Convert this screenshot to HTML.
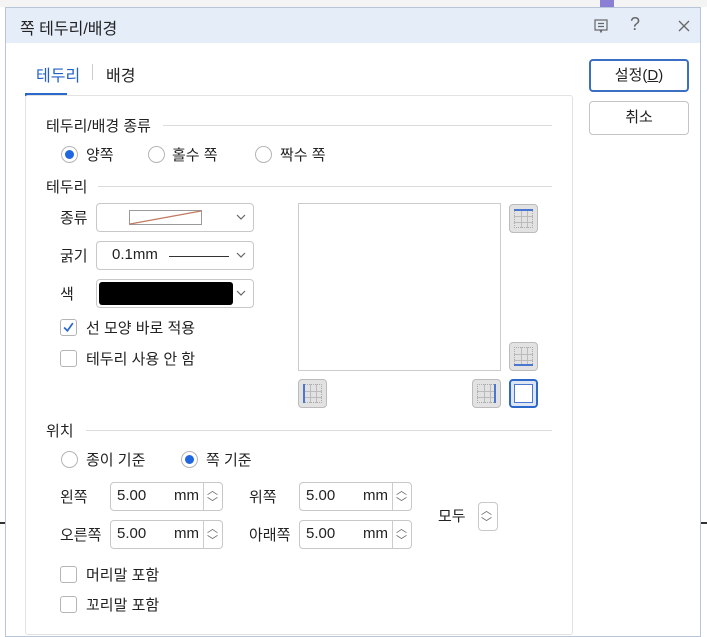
<!DOCTYPE html>
<html><head><meta charset="utf-8"><style>
*{box-sizing:border-box}
body{margin:0;width:707px;height:630px;overflow:hidden;background:#fff;font-family:"Liberation Sans","Noto Sans CJK KR",sans-serif;font-size:15px;color:#222;position:relative}
.a{position:absolute}
.dlg{left:5px;top:7px;width:696px;height:630px;background:#fff;border:1px solid #b8c4d8}
.title{left:0;top:0;width:100%;height:35px;background:#e5edf9}
.hr{height:1px;background:#dcdcdc}
.btn{border:1px solid #c4c4c4;border-radius:4px;background:#fff;text-align:center;line-height:31px}
.cb{width:17px;height:17px;border:1px solid #b5b5b5;border-radius:3px;background:#fff}
.rd{width:17px;height:17px;border:1px solid #b5b5b5;border-radius:50%;background:#fff}
.rd.on::after{content:"";position:absolute;left:3px;top:3px;width:9px;height:9px;border-radius:50%;background:#1f66e0}
.sel{border:1px solid #c8c8c8;border-radius:4px;background:#fff;height:29px}
.chev{position:absolute;right:6px;top:7px;width:12px;height:12px}
.spin{border:1px solid #c8c8c8;border-radius:4px;background:#fff;height:29px}
.ib{width:29px;height:29px;border:1px solid #bbb;border-radius:4px;background:#e2e2e2;background-image:linear-gradient(#e2e2e2,#e2e2e2)}
.grid{position:absolute;left:4px;top:4px;width:19px;height:19px;border:1px dotted #aaa;background:
linear-gradient(to right,transparent 6px,#bbb 6px,#bbb 7px,transparent 7px,transparent 12px,#bbb 12px,#bbb 13px,transparent 13px),
linear-gradient(to bottom,transparent 6px,#bbb 6px,#bbb 7px,transparent 7px,transparent 12px,#bbb 12px,#bbb 13px,transparent 13px)}
</style></head><body>
<div class="a" style="left:0;top:0;width:707px;height:7px;background:#f4f4f4"></div>
<div class="a" style="left:0;top:522px;width:707px;height:2px;background:#333"></div>
<div class="a" style="left:600px;top:0;width:14px;height:7px;background:#8a7fd4"></div>
<div class="a dlg">
 <div class="a title"></div>
 <div class="a" style="left:14px;top:7px;font-size:16px">쪽 테두리/배경</div>
 <svg class="a" style="left:587px;top:10px" width="16" height="16" viewBox="0 0 16 16" fill="none" stroke="#666" stroke-width="1.2"><rect x="2" y="2" width="12" height="10"/><path d="M5 5.5h6M5 8.5h6M7 12l1 2 1-2"/></svg>
 <div class="a" style="left:624px;top:6px;font-size:18px;color:#666">?</div>
 <svg class="a" style="left:671px;top:11px" width="14" height="14" viewBox="0 0 14 14" stroke="#666" stroke-width="1.3"><path d="M2 2l10 10M12 2L2 12"/></svg>
</div>
<div class="a" style="left:36px;top:62px;color:#2261c7;font-size:16px">테두리</div>
<div class="a" style="left:92px;top:64px;width:1px;height:16px;background:#ccc"></div>
<div class="a" style="left:106px;top:62px;font-size:16px">배경</div>
<div class="a" style="left:25px;top:93px;width:42px;height:3px;background:#2c68c9"></div>
<div class="a" style="left:25px;top:95px;width:548px;height:540px;border:1px solid #e2e2e2;border-radius:3px"></div>
<div class="a btn" style="left:589px;top:59px;width:100px;height:33px;border:2px solid #3b6fc3;line-height:29px">설정(<u>D</u>)</div>
<div class="a btn" style="left:589px;top:101px;width:100px;height:34px">취소</div>
<div class="a" style="left:46px;top:115px">테두리/배경 종류</div>
<div class="a hr" style="left:163px;top:125px;width:389px"></div>
<div class="a rd on" style="left:61px;top:146px"></div><div class="a" style="left:86px;top:144px">양쪽</div>
<div class="a rd" style="left:148px;top:146px"></div><div class="a" style="left:172px;top:144px">홀수 쪽</div>
<div class="a rd" style="left:255px;top:146px"></div><div class="a" style="left:280px;top:144px">짝수 쪽</div>
<div class="a" style="left:46px;top:176px">테두리</div>
<div class="a hr" style="left:98px;top:186px;width:454px"></div>
<div class="a" style="left:60px;top:207px">종류</div>
<div class="a sel" style="left:96px;top:203px;width:158px"><svg class="a" style="left:32px;top:6px" width="73" height="15"><rect x="0.5" y="0.5" width="72" height="14" fill="#fff" stroke="#999"/><path d="M1 14L72 1" stroke="#c07a60" stroke-width="1.2"/></svg><svg class="chev" viewBox="0 0 12 12"><path d="M2 4l4 4 4-4" fill="none" stroke="#666" stroke-width="1.2"/></svg></div>
<div class="a" style="left:60px;top:245px">굵기</div>
<div class="a sel" style="left:96px;top:241px;width:158px"><div class="a" style="left:15px;top:4px">0.1mm</div><div class="a" style="left:72px;top:14px;width:60px;height:1px;background:#333"></div><svg class="chev" viewBox="0 0 12 12"><path d="M2 4l4 4 4-4" fill="none" stroke="#666" stroke-width="1.2"/></svg></div>
<div class="a" style="left:60px;top:283px">색</div>
<div class="a sel" style="left:96px;top:279px;width:158px"><div class="a" style="left:2px;top:2px;width:134px;height:23px;background:#000;border-radius:3px"></div><svg class="chev" viewBox="0 0 12 12"><path d="M2 4l4 4 4-4" fill="none" stroke="#666" stroke-width="1.2"/></svg></div>
<div class="a cb" style="left:60px;top:319px"><svg style="position:absolute;left:1px;top:1px" width="13" height="13" viewBox="0 0 12 12"><path d="M2 6l3 3 5-7" fill="none" stroke="#2c68c9" stroke-width="1.6"/></svg></div>
<div class="a" style="left:86px;top:317px">선 모양 바로 적용</div>
<div class="a cb" style="left:60px;top:350px"></div><div class="a" style="left:86px;top:348px">테두리 사용 안 함</div>
<div class="a" style="left:298px;top:203px;width:203px;height:168px;border:1px solid #ccc"></div>
<div class="a ib" style="left:509px;top:204px"><div class="grid"></div><div class="a" style="left:4px;top:4px;width:19px;height:2px;background:#4a78d0"></div></div>
<div class="a ib" style="left:509px;top:342px"><div class="grid"></div><div class="a" style="left:4px;top:21px;width:19px;height:2px;background:#4a78d0"></div></div>
<div class="a ib" style="left:298px;top:379px"><div class="grid"></div><div class="a" style="left:4px;top:4px;width:2px;height:19px;background:#4a78d0"></div></div>
<div class="a ib" style="left:472px;top:379px"><div class="grid"></div><div class="a" style="left:21px;top:4px;width:2px;height:19px;background:#4a78d0"></div></div>
<div class="a ib" style="left:509px;top:379px;border:2px solid #2c68c9;background:#dfe6f3"><div class="a" style="left:3px;top:3px;width:19px;height:19px;border:1px solid #4a78d0;background:#fff"></div></div>
<div class="a" style="left:46px;top:420px">위치</div>
<div class="a hr" style="left:86px;top:430px;width:466px"></div>
<div class="a rd" style="left:61px;top:451px"></div><div class="a" style="left:86px;top:449px">종이 기준</div>
<div class="a rd on" style="left:181px;top:451px"></div><div class="a" style="left:206px;top:449px">쪽 기준</div>
<div class="a" style="left:60px;top:486px">왼쪽</div>
<div class="a" style="left:60px;top:524px">오른쪽</div>
<div class="a" style="left:249px;top:486px">위쪽</div>
<div class="a" style="left:249px;top:524px">아래쪽</div>
<div class="a spin" style="left:110px;top:482px;width:113px"><span class="a" style="left:6px;top:4px">5.00</span><span class="a" style="left:63px;top:4px">mm</span><div class="a" style="left:92px;top:0;width:1px;height:27px;background:#ccc"></div><span class="a" style="left:96px;top:-1px;font-size:11px;color:#666">︿</span><span class="a" style="left:96px;top:11px;font-size:11px;color:#666">﹀</span></div>
<div class="a spin" style="left:110px;top:520px;width:113px"><span class="a" style="left:6px;top:4px">5.00</span><span class="a" style="left:63px;top:4px">mm</span><div class="a" style="left:92px;top:0;width:1px;height:27px;background:#ccc"></div><span class="a" style="left:96px;top:-1px;font-size:11px;color:#666">︿</span><span class="a" style="left:96px;top:11px;font-size:11px;color:#666">﹀</span></div>
<div class="a spin" style="left:299px;top:482px;width:113px"><span class="a" style="left:6px;top:4px">5.00</span><span class="a" style="left:63px;top:4px">mm</span><div class="a" style="left:92px;top:0;width:1px;height:27px;background:#ccc"></div><span class="a" style="left:96px;top:-1px;font-size:11px;color:#666">︿</span><span class="a" style="left:96px;top:11px;font-size:11px;color:#666">﹀</span></div>
<div class="a spin" style="left:299px;top:520px;width:113px"><span class="a" style="left:6px;top:4px">5.00</span><span class="a" style="left:63px;top:4px">mm</span><div class="a" style="left:92px;top:0;width:1px;height:27px;background:#ccc"></div><span class="a" style="left:96px;top:-1px;font-size:11px;color:#666">︿</span><span class="a" style="left:96px;top:11px;font-size:11px;color:#666">﹀</span></div>
<div class="a" style="left:438px;top:505px">모두</div>
<div class="a spin" style="left:478px;top:502px;width:20px;height:29px"><span class="a" style="left:2px;top:-1px;font-size:11px;color:#666">︿</span><span class="a" style="left:2px;top:11px;font-size:11px;color:#666">﹀</span></div>
<div class="a cb" style="left:60px;top:566px"></div><div class="a" style="left:86px;top:564px">머리말 포함</div>
<div class="a cb" style="left:60px;top:596px"></div><div class="a" style="left:86px;top:594px">꼬리말 포함</div>
</body></html>
